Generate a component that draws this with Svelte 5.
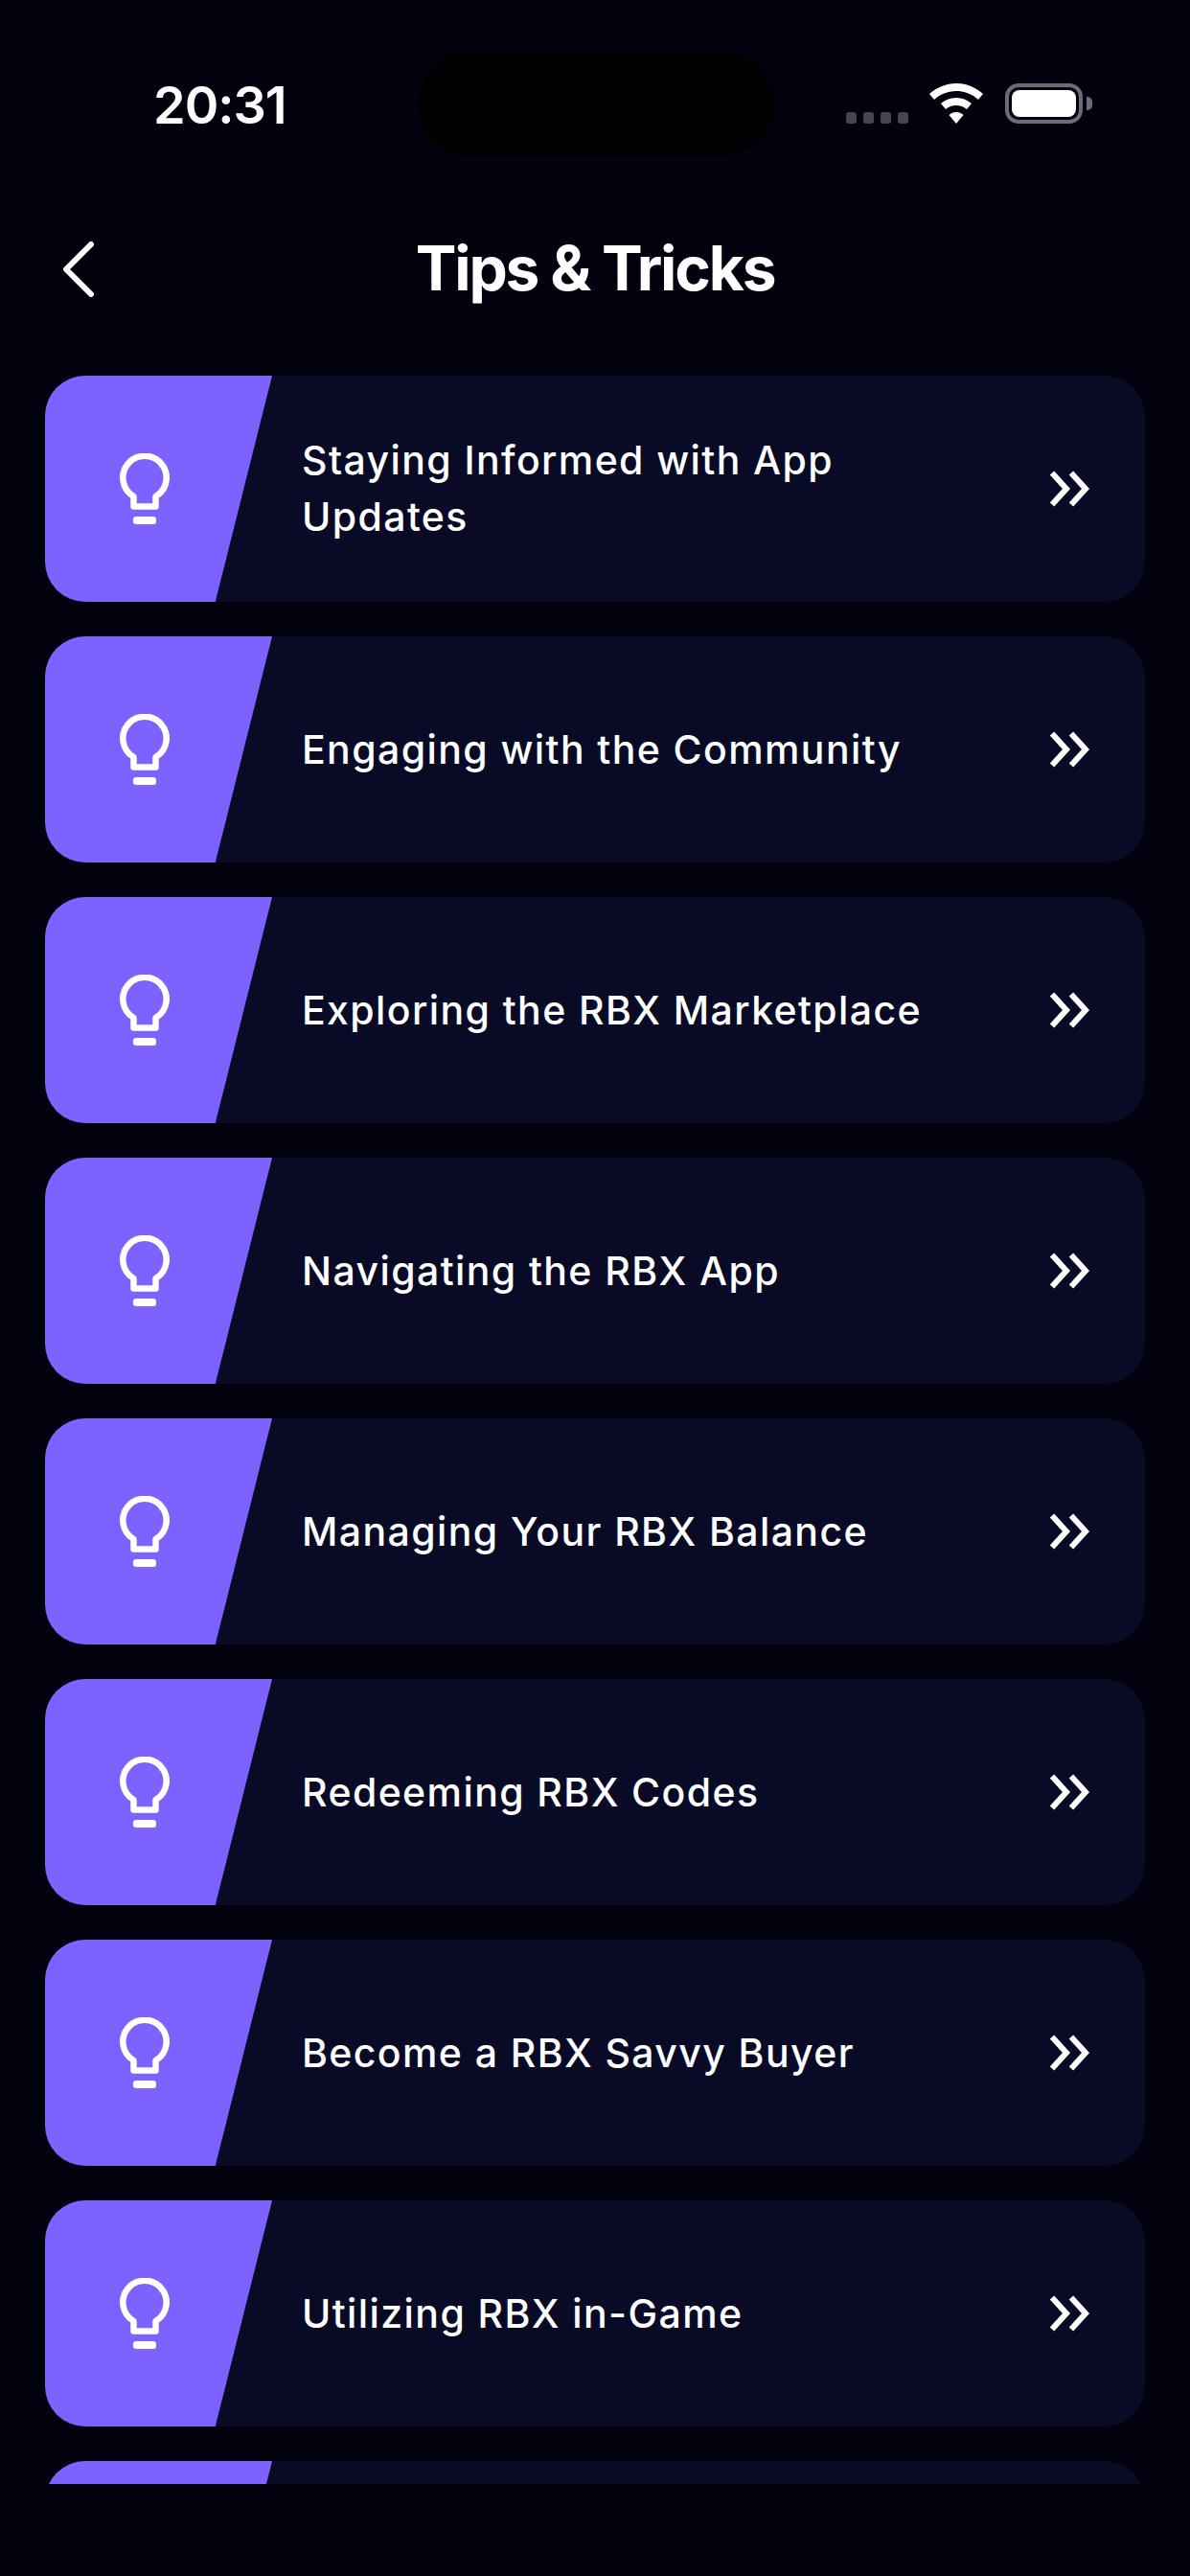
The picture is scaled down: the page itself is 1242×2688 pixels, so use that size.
<script>
  const tips = [
    'Staying Informed with App Updates',
    'Engaging with the Community',
    'Exploring the RBX Marketplace',
    'Navigating the RBX App',
    'Managing Your RBX Balance',
    'Redeeming RBX Codes',
    'Become a RBX Savvy Buyer',
    'Utilizing RBX in-Game',
    ''
  ];
</script>

<div class="page">
  <div class="status">
    <span class="time">20:31</span>
    <div class="island"></div>
    <div class="indicators">
      <div class="dots"><i></i><i></i><i></i><i></i></div>
      <svg class="wifi" viewBox="0 0 56 42" width="56" height="42" fill="#fff">
        <path d="M28 0C38.500 0 48 4 56 11L51 17C45 11.500 37 8 28 8C19 8 11 11.500 5 17L0 11C8 4 17.500 0 28 0Z" />
        <path d="M28 15C34 15 39.500 17 44 21L39 27C36 24.500 32 23 28 23C24 23 20 24.500 17 27L12 21C16.500 17 22 15 28 15Z" />
        <path d="M28 30C31 30 33.500 31 35.500 33L28 42L20.500 33C22.500 31 25 30 28 30Z" />
      </svg>
      <div class="battery"><div class="charge"></div></div>
      <div class="nub"></div>
    </div>
  </div>

  <header class="header">
    <svg class="back" viewBox="0 0 36 58" width="36" height="58" fill="none" stroke="#fff" stroke-width="6" stroke-linecap="round" stroke-linejoin="round">
      <path d="M31 3L5 29L31 55" />
    </svg>
    <h1>Tips &amp; Tricks</h1>
  </header>

  <main class="list">
    {#each tips as tip}
      <div class="card">
        <div class="tag">
          <svg class="bulb" viewBox="0 0 52 74" width="52" height="74" fill="none" stroke="#fff" stroke-width="6.500" stroke-linejoin="round">
            <path d="M14.500 45A22.700 22.700 0 1 1 37.500 45V55.500H14.500Z" />
            <rect x="14" y="66" width="24" height="8" rx="3" fill="#fff" stroke="none" />
          </svg>
        </div>
        <div class="title">{tip}</div>
        <svg class="more" viewBox="0 0 46 38" width="46" height="38" fill="none" stroke="#fff" stroke-width="6" stroke-linecap="butt" stroke-linejoin="miter">
          <path d="M4 2.500L19 19L4 35.500" />
          <path d="M24 2.500L39 19L24 35.500" />
        </svg>
      </div>
    {/each}
  </main>
</div>

<style>
  :global(html), :global(body) {
    margin: 0;
    background: #02020f;
  }
  .page {
    position: relative;
    width: 1242px;
    height: 2688px;
    overflow: hidden;
    background: #02020f;
    color: #fff;
    font-family: Inter, "Liberation Sans", sans-serif;
  }
  .status {
    display: flex;
    align-items: flex-start;
    justify-content: space-between;
    height: 232px;
    padding: 87px 102px 0 160px;
    box-sizing: border-box;
  }
  .time {
    font-size: 54px;
    line-height: 46px;
    font-weight: 600;
    letter-spacing: -1px;
  }
  .island {
    position: absolute;
    left: 436px;
    top: 54px;
    width: 371px;
    height: 109px;
    border-radius: 55px;
    background: #000;
  }
  .indicators {
    display: flex;
    align-items: flex-start;
  }
  .dots {
    display: flex;
    gap: 7px;
    margin: 30px 22px 0 0;
  }
  .dots i {
    width: 11px;
    height: 12px;
    border-radius: 3px;
    background: #46464f;
  }
  .battery {
    width: 81px;
    height: 42px;
    margin-left: 23px;
    box-sizing: border-box;
    border: 4px solid #6c6c75;
    border-radius: 14px;
    padding: 3px;
  }
  .charge {
    width: 100%;
    height: 100%;
    background: #fff;
    border-radius: 8px;
  }
  .nub {
    width: 6px;
    height: 14px;
    margin: 14px 0 0 4px;
    border-radius: 0 5px 5px 0;
    background: #6c6c75;
  }
  .header {
    position: relative;
    display: flex;
    align-items: center;
    justify-content: center;
    height: 100px;
  }
  .back {
    position: absolute;
    left: 64px;
    top: 20px;
  }
  h1 {
    margin: 0;
    padding-bottom: 4px;
    font-size: 64px;
    line-height: 96px;
    font-weight: 700;
    letter-spacing: -2.200px;
  }
  .list {
    display: flex;
    flex-direction: column;
    gap: 36px;
    height: 2200px;
    margin-top: 60px;
    padding: 0 47px;
    overflow: hidden;
  }
  .card {
    flex: none;
    display: flex;
    align-items: center;
    height: 236px;
    border-radius: 42px;
    background: #090b26;
    overflow: hidden;
  }
  .tag {
    flex: none;
    display: flex;
    align-items: center;
    box-sizing: border-box;
    width: 237px;
    height: 100%;
    padding: 0 0 0 78px;
    background: #7e62ff;
    clip-path: polygon(0 0, 100% 0, 75% 100%, 0 100%);
  }
  .bulb {
    display: block;
  }
  .title {
    flex: 1;
    margin-left: 31px;
    padding-right: 110px;
    font-size: 41px;
    line-height: 59px;
    font-weight: 500;
    letter-spacing: 1.400px;
  }
  .more {
    flex: none;
    margin-right: 55px;
  }
</style>
